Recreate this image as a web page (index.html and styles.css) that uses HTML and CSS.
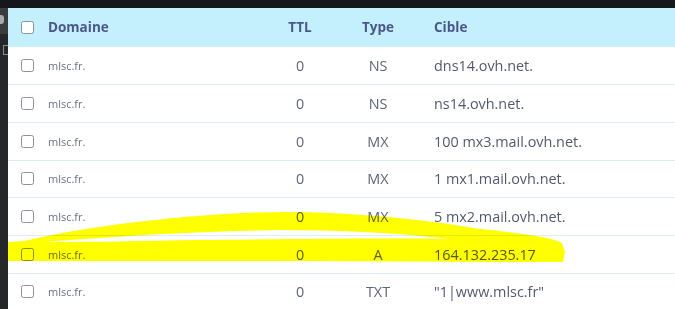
FILE: index.html
```html
<!DOCTYPE html>
<html lang="fr">
<head>
<meta charset="utf-8">
<title>Zone DNS</title>
<link rel="stylesheet" href="styles.css">
</head>
<body>
<div class="page">
  <div class="topbar"></div>
  <div class="topbar"></div>
  <aside class="side">
    <span class="side-block"><span class="side-glyph"></span></span>
    <span class="side-icon"></span>
  </aside>
  <main class="panel">
    <div class="table">
      <div class="row head">
        <span class="cb"></span>
        <span class="c-dom">Domaine</span>
        <span class="c-ttl">TTL</span>
        <span class="c-type">Type</span>
        <span class="c-target">Cible</span>
      </div>
      <div class="row"><span class="cb"></span><span class="c-dom">mlsc.fr.</span><span class="c-ttl">0</span><span class="c-type">NS</span><span class="c-target">dns14.ovh.net.</span></div>
      <div class="row"><span class="cb"></span><span class="c-dom">mlsc.fr.</span><span class="c-ttl">0</span><span class="c-type">NS</span><span class="c-target">ns14.ovh.net.</span></div>
      <div class="row"><span class="cb"></span><span class="c-dom">mlsc.fr.</span><span class="c-ttl">0</span><span class="c-type">MX</span><span class="c-target">100 mx3.mail.ovh.net.</span></div>
      <div class="row"><span class="cb"></span><span class="c-dom">mlsc.fr.</span><span class="c-ttl">0</span><span class="c-type">MX</span><span class="c-target">1 mx1.mail.ovh.net.</span></div>
      <div class="row"><span class="cb"></span><span class="c-dom">mlsc.fr.</span><span class="c-ttl">0</span><span class="c-type">MX</span><span class="c-target">5 mx2.mail.ovh.net.</span></div>
      <div class="row"><span class="cb"></span><span class="c-dom">mlsc.fr.</span><span class="c-ttl">0</span><span class="c-type">A</span><span class="c-target">164.132.235.17</span></div>
      <div class="row"><span class="cb"></span><span class="c-dom">mlsc.fr.</span><span class="c-ttl">0</span><span class="c-type">TXT</span><span class="c-target">"1|www.mlsc.fr"</span></div>
    </div>
  </main>
</div>
<svg class="marker" width="675" height="309" viewBox="0 0 675 309" aria-hidden="true">
  <path fill="#ffff00" fill-rule="evenodd" d="M8,242 L24,241 C70,230 140,220 210,215 C250,212 290,211 330,213 C390,216 440,222 480,229 C520,233 550,237 562,243 L565,252 L563,262 L520,262 L300,261 L8,261 Z M45,242 C120,236 200,231 280,230 C340,230 400,233 450,239 C380,238 300,239 200,240 C140,241 90,242 45,242 Z"/>
</svg>
</body>
</html>
```
FILE: styles.css
```css
* { box-sizing: border-box; }
html, body { margin: 0; padding: 0; }
body {
  width: 675px;
  height: 309px;
  overflow: hidden;
  background: #1f2023;
  font-family: "Open Sans", "Noto Sans", sans-serif;
  position: relative;
}
.page {
  display: grid;
  grid-template-columns: 8px 1fr;
  grid-template-rows: 8px 1fr;
  height: 309px;
}
.topbar { background: #15171c; }
.side {
  background: #262729;
  display: flex;
  flex-direction: column;
  overflow: hidden;
}
.side-block {
  display: block;
  background: #3b3c3e;
  height: 26px;
  padding-top: 7px;
}
.side-glyph {
  display: block;
  width: 4px;
  height: 9px;
  border-radius: 0 3px 3px 0;
  background: #a9abb0;
}
.side-icon {
  display: block;
  width: 8px;
  height: 10px;
  margin-top: 11px;
  margin-left: 3px;
  border: 1px solid #8a8b8e;
  border-right: none;
}
.panel {
  background: #ffffff;
  overflow: hidden;
}
.table { display: flex; flex-direction: column; }
.row {
  display: grid;
  grid-template-columns: 40px 222px 60px 96px 1fr;
  align-items: center;
  height: 37.7px;
  border-top: 1px solid #dcedf3;
  color: #5f6575;
  font-size: 14.4px;
}
.row.head {
  height: 38.5px;
  border-top: none;
  background: #c4effc;
  color: #4a5789;
  font-weight: 700;
  font-size: 13.5px;
}
.row.head + .row { border-top: none; }
.cb {
  width: 13px;
  height: 13px;
  margin-left: 13px;
  border: 1.5px solid #8c919b;
  border-radius: 2.5px;
  background: #ffffff;
}
.c-dom { font-size: 11px; color: #6c717c; }
.row.head .c-dom { font-size: 13.5px; color: #4a5789; }
.c-ttl, .c-type { text-align: center; }
.c-target { padding-left: 8px; white-space: nowrap; color: #535a6b; }
.row.head .c-target { color: #4a5789; }
.marker {
  position: absolute;
  left: 0;
  top: 0;
  mix-blend-mode: multiply;
  pointer-events: none;
}
```
